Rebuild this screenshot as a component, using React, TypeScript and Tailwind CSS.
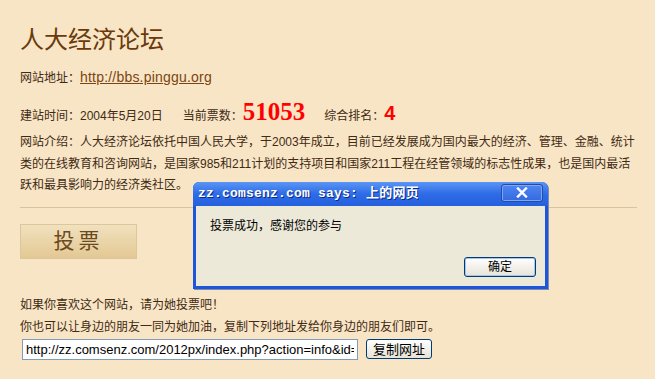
import React from 'react'

const sans = "font-['Liberation_Sans','Noto_Sans_CJK_SC',sans-serif]"

function AlertDialog() {
  return (
    <div className="absolute left-[193px] top-[182px] w-[355px] h-[107px] rounded-t-[6px] bg-[#1D56D8] p-[3px] pt-0 shadow-[1px_1px_0_#7c8bb0]">
      {/* title bar */}
      <div className="h-[24px] flex items-center justify-between bg-gradient-to-b from-[#5B95F5] via-[#2E6BE6] to-[#2460DE] rounded-t-[6px] -mx-[3px] px-[5px]">
        <span className="font-['Liberation_Mono','Noto_Sans_CJK_SC',monospace] font-bold text-[13px] text-white tracking-[0.2px] whitespace-nowrap [text-shadow:1px_1px_0_#0a2a8a]">
          zz.comsenz.com says: 上的网页
        </span>
        <div className="w-[42px] h-[18px] mb-[3px] rounded-[3px] border border-[#244AA8] bg-gradient-to-b from-[#4E86F0] to-[#3469E0] shadow-[inset_0_0_0_1px_#7FA6F0] flex items-center justify-center">
          <svg width="12" height="11" viewBox="0 0 12 11">
            <path d="M2 1.5 L10 9.5 M10 1.5 L2 9.5" stroke="#fff" strokeWidth="2.4" strokeLinecap="square" />
          </svg>
        </div>
      </div>
      {/* body */}
      <div className={`h-[80px] bg-[#ECE9D8] relative ${sans}`}>
        <div className="pl-[14px] pt-[11px] text-[12px] text-black">投票成功，感谢您的参与</div>
        <button className="absolute right-[9px] bottom-[9px] w-[72px] h-[20px] rounded-[3px] border border-[#003C74] bg-gradient-to-b from-white to-[#E6E3D6] text-[12px] text-black shadow-[inset_0_0_0_1px_#A8C4EE]">
          确定
        </button>
      </div>
    </div>
  )
}

export default function App() {
  return (
    <div className={`relative w-[655px] h-[379px] bg-[#F8E5C5] text-[#3F2A14] text-[12px] ${sans} overflow-hidden`}>
      <div className="px-[20px] pt-[25px]">
        {/* site name */}
        <h1 className="text-[24px] leading-[30px] text-[#6A3A0C] font-normal">人大经济论坛</h1>

        {/* address */}
        <div className="mt-[14px] leading-[16px]">
          网站地址：
          <a href="#" className="text-[#7A4512] underline text-[14px] tracking-[0.2px]">http://bbs.pinggu.org</a>
        </div>

        {/* stats */}
        <div className="mt-[11px] flex items-baseline leading-[30px] h-[30px]">
          <span>建站时间：2004年5月20日</span>
          <span className="ml-[20px]">当前票数：</span>
          <span className="font-['Liberation_Serif',serif] font-bold text-[25px] text-[#FF0000]">51053</span>
          <span className="ml-[19px]">综合排名：</span>
          <span className="font-bold text-[20px] text-[#FF0000]">4</span>
        </div>

        {/* intro */}
        <p className="mt-[5px] leading-[21.5px] whitespace-nowrap">
          网站介绍：人大经济论坛依托中国人民大学，于2003年成立，目前已经发展成为国内最大的经济、管理、金融、统计
          <br />
          类的在线教育和咨询网站，是国家985和211计划的支持项目和国家211工程在经管领域的标志性成果，也是国内最活
          <br />
          跃和最具影响力的经济类社区。
        </p>

        <div className="mt-[10px] h-px bg-[#D9C29C] w-[617px]" />

        {/* vote button */}
        <button className="mt-[16px] w-[117px] h-[35px] border border-[#DCC79D] bg-gradient-to-b from-[#F1E1BE] to-[#E3C893] text-[21px] text-[#6B4A20] tracking-[4px]">
          投票
        </button>

        <div className="mt-[35px] leading-[22px]">
          <div>如果你喜欢这个网站，请为她投票吧！</div>
          <div>你也可以让身边的朋友一同为她加油，复制下列地址发给你身边的朋友们即可。</div>
        </div>

        <div className="mt-[1px] flex items-center gap-[8px] pl-[2px]">
          <input
            readOnly
            value="http://zz.comsenz.com/2012px/index.php?action=info&id=2"
            className="w-[336px] h-[21px] border border-[#7F9DB9] bg-white px-[3px] text-[13px] text-black outline-none"
          />
          <button className="w-[66px] h-[20px] rounded-[3px] border border-[#003C74] bg-gradient-to-b from-white to-[#E6E3D6] text-[13px] text-black">
            复制网址
          </button>
        </div>
      </div>

      <AlertDialog />
    </div>
  )
}
